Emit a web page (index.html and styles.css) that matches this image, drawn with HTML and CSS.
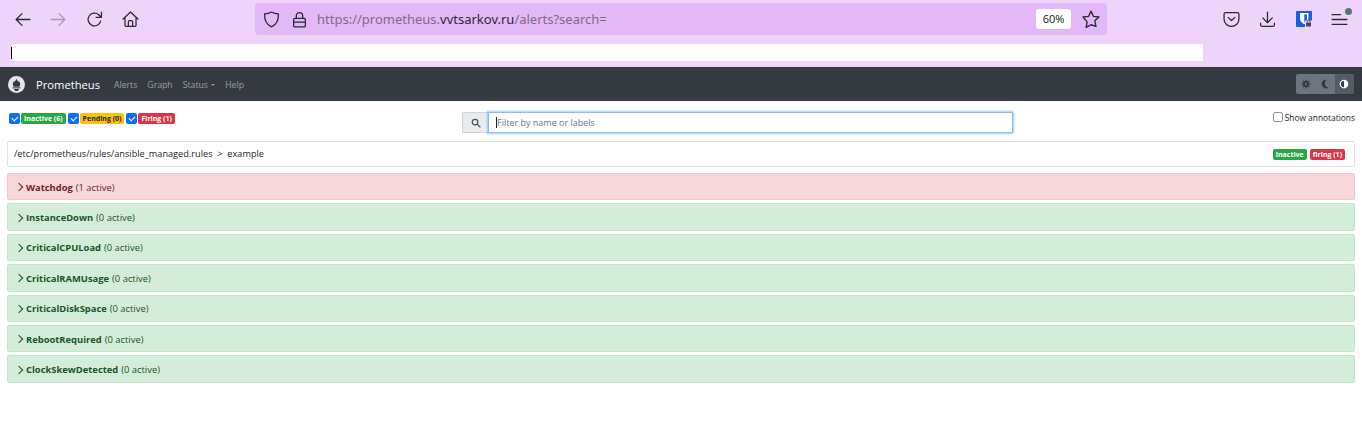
FILE: index.html
```html
<!DOCTYPE html>
<html lang="en">
<head>
    <meta charset="UTF-8">
    <title>Prometheus Time Series Collection and Processing Server</title>
    <link rel="stylesheet" href="styles.css">
</head>
<body>
    <!-- Browser toolbar -->
    <div class="browser">
        <div class="toolbar">
            <div class="nav-buttons">
                <svg class="tool-icon" viewBox="0 0 16 16"><path d="M15 8H2M7.5 2.5 2 8l5.500 5.500"/></svg>
                <svg class="tool-icon faded" viewBox="0 0 16 16"><path d="M1 8h13M8.500 2.500 14 8l-5.500 5.500"/></svg>
                <svg class="tool-icon" viewBox="0 0 16 16"><path d="M13.800 9.500A6 6 0 1 1 12 3.500l2 2M14.500 1v5h-5"/></svg>
                <svg class="tool-icon" viewBox="0 0 16 16"><path d="M1 7.500 8 1l7 6.500M2.800 6v7.500a1 1 0 0 0 1 1h8.400a1 1 0 0 0 1-1V6M6 14.500V10a1 1 0 0 1 1-1h2a1 1 0 0 1 1 1v4.500"/></svg>
            </div>
            <div class="urlbar">
                <svg class="tool-icon" viewBox="0 0 16 16"><path d="M8 1c2 1.200 4 1.700 6.500 1.800C14.700 9 12.500 13 8 15 3.500 13 1.300 9 1.500 2.800 4 2.700 6 2.200 8 1z"/></svg>
                <svg class="tool-icon" viewBox="0 0 16 16"><path d="M5 7V4.500a3 3 0 0 1 6 0V7M3.500 7h9a1 1 0 0 1 1 1v6a1 1 0 0 1-1 1h-9a1 1 0 0 1-1-1V8a1 1 0 0 1 1-1zM2.500 10.500h11"/></svg>
                <span class="url">https://prometheus.<b>vvtsarkov.ru</b>/alerts?search=</span>
                <span class="zoom-level">60%</span>
                <svg class="tool-icon star" viewBox="0 0 16 16"><path d="M8 1l2.100 4.600 5 .6-3.700 3.400 1 4.900L8 13.100l-4.400 2.400 1-4.900L.9 6.200l5-.6z"/></svg>
            </div>
            <div class="tool-buttons">
                <svg class="tool-icon" viewBox="0 0 16 16"><path d="M2.500 1.500h11a1.500 1.500 0 0 1 1.500 1.500v4.500a7 7 0 0 1-14 0V3a1.500 1.500 0 0 1 1.500-1.500zM4.800 6 8 9l3.200-3"/></svg>
                <svg class="tool-icon" viewBox="0 0 16 16"><path d="M8 1v10M3.500 6.500 8 11l4.500-4.500M1.500 11.500V13a1.500 1.500 0 0 0 1.500 1.500h10a1.500 1.500 0 0 0 1.500-1.500v-1.500"/></svg>
                <svg class="vault-icon" viewBox="0 0 16 16">
                    <rect width="16" height="16" rx="1" fill="#175ddc"/>
                    <path d="M4 2h8.500v6c0 2.500-2 4-4.200 5.200C6 12 4 10.500 4 8z" fill="#fff"/>
                    <path d="M8.300 3.500h2.700v4.500c0 1.500-1.200 2.600-2.700 3.500z" fill="#175ddc"/>
                    <rect x="9" y="9.500" width="7" height="6.500" fill="#eed4fa"/>
                    <rect x="10" y="11.500" width="5" height="4" fill="#4a4a4f"/>
                    <path d="M11 11.500v-1a1.500 1.500 0 0 1 3 0v1" fill="none" stroke="#4a4a4f"/>
                </svg>
                <span class="menu-button">
                    <svg class="tool-icon" viewBox="0 0 16 16"><path d="M1 3.500h8M1 8h14M1 12.500h14"/></svg>
                    <span class="update-dot"></span>
                </span>
            </div>
        </div>
        <div class="bookmarks">
            <div class="notice-bar"><span class="caret"></span></div>
        </div>
    </div>

    <!-- Prometheus navbar -->
    <nav class="navbar">
        <svg class="logo" viewBox="0 0 24 24">
            <circle cx="12" cy="12" r="12" fill="#e6e6e6"/>
            <path d="M12 3.500c.6 2.500 2 3.500 2.700 4.800.3-.5.400-1 .4-1.500 1.600 2 2.400 4 2 6-.2 1-.6 1.700-1.300 2.200H8.200c-.7-.5-1.100-1.200-1.300-2.200-.4-2 .4-4 2-6 0 .5.100 1 .4 1.500C10 7 11.400 6 12 3.500z" fill="#343a40"/>
            <rect x="6.500" y="16" width="11" height="1.500" fill="#343a40"/>
            <path d="M8.500 18.500h7L14 21h-4z" fill="#343a40"/>
        </svg>
        <span class="brand">Prometheus</span>
        <a class="nav-link">Alerts</a>
        <a class="nav-link">Graph</a>
        <a class="nav-link">Status <span class="nav-caret"></span></a>
        <a class="nav-link">Help</a>
        <div class="theme-toggle">
            <span class="theme-btn">
                <svg viewBox="0 0 16 16"><path d="M8 1v14M1 8h14M3 3l10 10M13 3 3 13" stroke="#343a40" stroke-width="2"/><circle cx="8" cy="8" r="5" fill="#343a40"/><circle cx="8" cy="8" r="1.800" fill="#6c757d"/></svg>
            </span>
            <span class="theme-btn">
                <svg viewBox="0 0 16 16"><path d="M10 1a7 7 0 1 0 4 12.500C8 14 6 6 10 1z" fill="#343a40"/></svg>
            </span>
            <span class="theme-btn active">
                <svg viewBox="0 0 16 16"><circle cx="8" cy="8" r="7" fill="#fff"/><path d="M8 3a5 5 0 0 0 0 10z" fill="#343a40"/></svg>
            </span>
        </div>
    </nav>

    <main class="content">
        <div class="filter-row">
            <div class="state-filters">
                <span class="check"></span><span class="badge green">Inactive (6)</span>
                <span class="check"></span><span class="badge yellow">Pending (0)</span>
                <span class="check"></span><span class="badge red">Firing (1)</span>
            </div>
            <div class="search">
                <span class="search-addon">
                    <svg viewBox="0 0 16 16"><circle cx="6.500" cy="6.500" r="4.500"/><path d="m10 10 5 5"/></svg>
                </span>
                <div class="search-input"><span class="input-caret"></span>Filter by name or labels</div>
            </div>
            <label class="annotations"><span class="empty-check"></span>Show annotations</label>
        </div>

        <div class="group-header">
            <span class="group-name">/etc/prometheus/rules/ansible_managed.rules &nbsp;&gt;&nbsp; example</span>
            <span class="group-badges">
                <span class="badge green">inactive</span>
                <span class="badge red">firing (1)</span>
            </span>
        </div>

        <div class="alert firing"><span class="chevron"></span><b>Watchdog</b> (1 active)</div>
        <div class="alert"><span class="chevron"></span><b>InstanceDown</b> (0 active)</div>
        <div class="alert"><span class="chevron"></span><b>CriticalCPULoad</b> (0 active)</div>
        <div class="alert"><span class="chevron"></span><b>CriticalRAMUsage</b> (0 active)</div>
        <div class="alert"><span class="chevron"></span><b>CriticalDiskSpace</b> (0 active)</div>
        <div class="alert"><span class="chevron"></span><b>RebootRequired</b> (0 active)</div>
        <div class="alert"><span class="chevron"></span><b>ClockSkewDetected</b> (0 active)</div>
    </main>
</body>
</html>
```

FILE: styles.css
```css
* {
    box-sizing: border-box;
}

body {
    margin: 0;
    font-family: "Open Sans", "Noto Sans", sans-serif;
    font-size: 9px;
    color: #212529;
    background-color: #fff;
}

/* Browser chrome */
.browser {
    background-color: #eed4fa;
    height: 67px;
}

.toolbar {
    display: flex;
    align-items: center;
    height: 44px;
    padding: 2px 0 8px;
}

.tool-icon {
    width: 17px;
    height: 17px;
    fill: none;
    stroke: #2b2a33;
    stroke-width: 1.2;
    stroke-linejoin: round;
    stroke-linecap: round;
    flex-shrink: 0;
}

.faded {
    opacity: 0.35;
}

.nav-buttons {
    display: flex;
    gap: 19px;
    width: 255px;
    padding-left: 14px;
}

.urlbar {
    display: flex;
    align-items: center;
    width: 852px;
    height: 32px;
    padding: 0 7px 0 8px;
    gap: 11px;
    background-color: #e2b9f7;
    border-radius: 4px;
}

.url {
    flex: 1;
    margin-left: -2px;
    font-family: "Noto Sans", sans-serif;
    font-size: 13px;
    color: #7d6b8a;
    white-space: nowrap;
}

.url b {
    font-weight: 400;
    color: #2b2a33;
}

.zoom-level {
    width: 35px;
    height: 20px;
    line-height: 20px;
    text-align: center;
    font-size: 11px;
    color: #15141a;
    background-color: #fff;
    border-radius: 3px;
}

.star {
    width: 18px;
    height: 18px;
}

.tool-buttons {
    display: flex;
    align-items: center;
    gap: 19px;
    margin-left: 116px;
}

.vault-icon {
    width: 16px;
    height: 16px;
    margin-left: 1px;
}

.menu-button {
    position: relative;
    display: flex;
}

.update-dot {
    position: absolute;
    top: -3px;
    right: -4px;
    width: 7px;
    height: 7px;
    border-radius: 50%;
    background-color: #54786a;
}

.bookmarks {
    padding-left: 12px;
}

.notice-bar {
    display: flex;
    align-items: center;
    width: 1191px;
    height: 17px;
    background-color: #fff;
}

.caret {
    width: 1px;
    height: 12px;
    margin-left: -1px;
    background-color: #000;
}

/* Navbar */
.navbar {
    display: flex;
    align-items: center;
    height: 34px;
    padding: 0 8px;
    background-color: #343a40;
}

.logo {
    width: 17px;
    height: 17px;
    margin-right: 11px;
}

.brand {
    margin-right: 14px;
    font-size: 11.2px;
    color: #fff;
}

.nav-link {
    margin: 1px 10px 0 0;
    font-size: 8.7px;
    color: rgba(255, 255, 255, 0.5);
}

.nav-caret {
    display: inline-block;
    vertical-align: middle;
    margin-left: 1px;
    border-top: 2px solid rgba(255, 255, 255, 0.5);
    border-left: 2px solid transparent;
    border-right: 2px solid transparent;
}

.theme-toggle {
    display: flex;
    margin-left: auto;
    height: 20px;
    border-radius: 2px;
    overflow: hidden;
    background-color: #6c757d;
}

.theme-btn {
    display: flex;
    align-items: center;
    justify-content: center;
    width: 19.300px;
}

.theme-btn svg {
    width: 10px;
    height: 10px;
}

.theme-btn.active {
    background-color: #545b62;
}

/* Page content */
.content {
    padding: 0 7px;
}

.filter-row {
    position: relative;
    display: flex;
    justify-content: space-between;
    height: 40px;
}

.state-filters {
    display: flex;
    align-items: center;
    height: 12px;
    margin: 11px 0 0 1px;
    gap: 1px;
}

.check {
    position: relative;
    width: 11px;
    height: 11px;
    margin-left: 1px;
    border-radius: 2px;
    background-color: #0d6efd;
}

.check::after {
    content: "";
    position: absolute;
    left: 3px;
    top: 3px;
    width: 5px;
    height: 3px;
    border-left: 1.300px solid #fff;
    border-bottom: 1.300px solid #fff;
    transform: rotate(-45deg);
}

.badge {
    display: inline-block;
    padding: 0 3px;
    height: 11px;
    line-height: 11px;
    font-size: 7px;
    font-weight: 700;
    color: #fff;
    border-radius: 2px;
    white-space: nowrap;
}

.green {
    background-color: #28a745;
}

.yellow {
    background-color: #ffc107;
    color: #212529;
}

.red {
    background-color: #dc3545;
}

.search {
    position: absolute;
    left: 455px;
    top: 11px;
    display: flex;
    width: 551px;
    height: 21px;
}

.search-addon {
    display: flex;
    align-items: center;
    justify-content: center;
    width: 26px;
    background-color: #e9ecef;
    border: 1px solid #ced4da;
    border-right: 0;
    border-radius: 2px 0 0 2px;
}

.search-addon svg {
    width: 10px;
    height: 10px;
    fill: none;
    stroke: #495057;
    stroke-width: 2;
}

.search-input {
    display: flex;
    align-items: center;
    flex: 1;
    padding-left: 7px;
    color: #6c757d;
    background-color: #fff;
    border: 1px solid #80bdff;
    border-radius: 0 2px 2px 0;
    box-shadow: 0 0 0 1.500px rgba(0, 123, 255, 0.25);
}

.input-caret {
    width: 1px;
    height: 11px;
    background-color: #212529;
}

.annotations {
    display: flex;
    align-items: center;
    height: 12px;
    margin-top: 10px;
    font-size: 8.4px;
}

.empty-check {
    width: 10px;
    height: 10px;
    margin-right: 2px;
    background-color: #fff;
    border: 1px solid #8d949a;
    border-radius: 2px;
}

.group-header {
    display: flex;
    align-items: center;
    justify-content: space-between;
    height: 26px;
    margin-bottom: 6px;
    padding: 0 9px 0 6px;
    background-color: #fff;
    border: 1px solid #dee2e6;
    border-radius: 2px;
}

.group-name {
    margin-top: -1px;
    font-size: 9.200px;
}

.group-badges {
    display: flex;
    gap: 3px;
}

.alert {
    display: flex;
    align-items: center;
    height: 27.400px;
    margin-bottom: 3px;
    padding: 1px 0 0 8px;
    font-size: 9.400px;
    color: #155724;
    background-color: #d4edda;
    border: 1px solid #c3e6cb;
    border-radius: 2px;
}

.alert.firing {
    color: #721c24;
    background-color: #f8d7da;
    border-color: #f5c6cb;
}

.alert b {
    margin: 0 3px 0 4px;
}

.chevron {
    width: 6px;
    height: 6px;
    border-top: 1.400px solid currentColor;
    border-right: 1.400px solid currentColor;
    transform: rotate(45deg);
}
```
